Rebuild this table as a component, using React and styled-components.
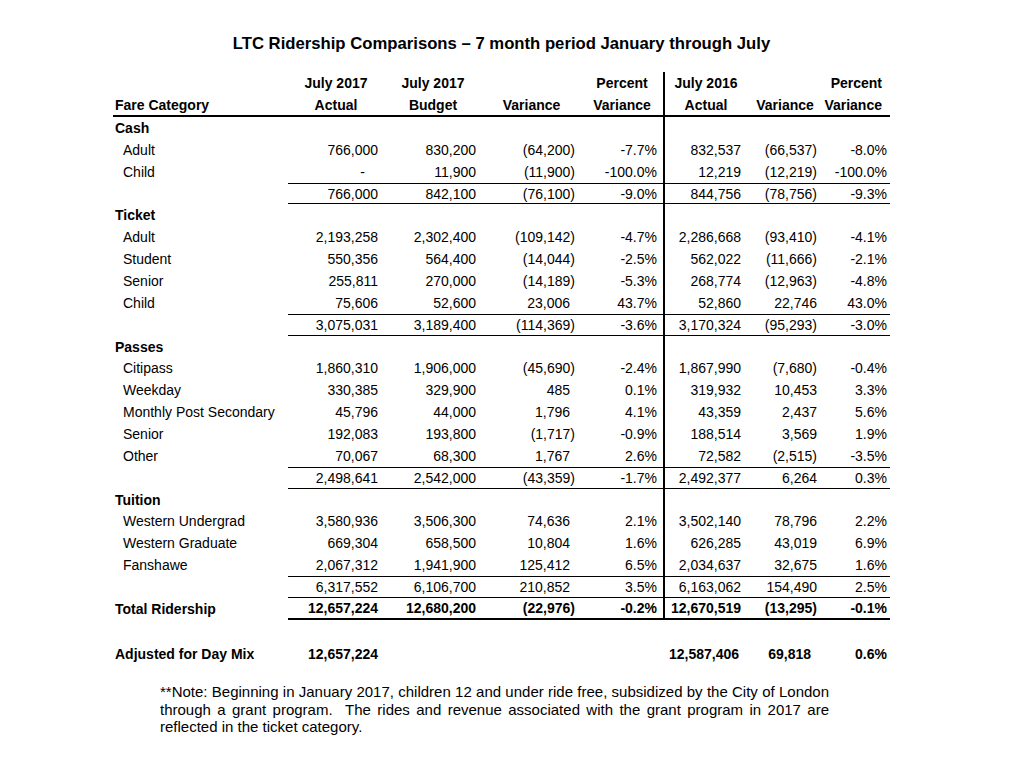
import React from 'react';
import styled, { createGlobalStyle } from 'styled-components';

const GlobalStyle = createGlobalStyle`
  body {
    margin: 0;
    background: #fff;
    color: #000;
    font-family: "Liberation Sans", Arial, sans-serif;
  }
`;

const Page = styled.div`
  width: 777px;
  padding: 34px 0 30px 113px;
`;

const Title = styled.h1`
  margin: 0 0 18px;
  height: 20px;
  line-height: 20px;
  font-size: 16.7px;
  font-weight: 700;
  text-align: center;
`;

const Row = styled.div`
  display: grid;
  grid-template-columns: 175px 602px;
  box-sizing: border-box;
  height: ${(p) => p.$h || 21.86}px;
  font-size: 14px;
  font-weight: ${(p) => (p.$bold ? 700 : 400)};
  border-bottom: ${(p) => (p.$rule ? `${p.$rule}px solid #000` : 'none')};
`;

const Label = styled.div`
  display: flex;
  align-items: center;
  padding-left: ${(p) => (p.$indent ? 10 : 2)}px;
  font-weight: ${(p) => (p.$bold ? 700 : 'inherit')};
  white-space: nowrap;
`;

const Figures = styled.div`
  display: grid;
  grid-template-columns: 96px 98px 99px 82px 84px 76px 67px;
  box-sizing: border-box;
  border-top: ${(p) => p.$top || 0}px solid #000;
  border-bottom: ${(p) => p.$bottom || 0}px solid #000;
`;

const Num = styled.div`
  display: flex;
  align-items: center;
  justify-content: flex-end;
  padding-right: ${(p) => p.$pad}px;
  border-left: ${(p) => (p.$divider ? '2px solid #000' : 'none')};
  white-space: nowrap;
`;

const Head = styled.div`
  display: flex;
  align-items: center;
  justify-content: ${(p) => (p.$right ? 'flex-end' : 'center')};
  padding-right: ${(p) => (p.$right ? 8 : 0)}px;
  border-left: ${(p) => (p.$divider ? '2px solid #000' : 'none')};
  white-space: nowrap;
`;

const Note = styled.div`
  margin: 18.5px 61px 0 47px;
  font-size: 15px;
  line-height: 17.5px;
`;

const NoteLine = styled.div`
  white-space: nowrap;
  text-align: ${(p) => (p.$justify ? 'justify' : 'left')};
  text-align-last: ${(p) => (p.$justify ? 'justify' : 'left')};
`;

const PADS = [6, 6, 6, 6, 6, 6, 3];

const data = [
  { label: 'Cash', kind: 'section' },
  { label: 'Adult', v: ['766,000', '830,200', '(64,200)', '-7.7%', '832,537', '(66,537)', '-8.0%'] },
  { label: 'Child', v: ['-', '11,900', '(11,900)', '-100.0%', '12,219', '(12,219)', '-100.0%'] },
  { kind: 'sub', v: ['766,000', '842,100', '(76,100)', '-9.0%', '844,756', '(78,756)', '-9.3%'] },
  { label: 'Ticket', kind: 'section' },
  { label: 'Adult', v: ['2,193,258', '2,302,400', '(109,142)', '-4.7%', '2,286,668', '(93,410)', '-4.1%'] },
  { label: 'Student', v: ['550,356', '564,400', '(14,044)', '-2.5%', '562,022', '(11,666)', '-2.1%'] },
  { label: 'Senior', v: ['255,811', '270,000', '(14,189)', '-5.3%', '268,774', '(12,963)', '-4.8%'] },
  { label: 'Child', v: ['75,606', '52,600', '23,006', '43.7%', '52,860', '22,746', '43.0%'] },
  { kind: 'sub', v: ['3,075,031', '3,189,400', '(114,369)', '-3.6%', '3,170,324', '(95,293)', '-3.0%'] },
  { label: 'Passes', kind: 'section' },
  { label: 'Citipass', v: ['1,860,310', '1,906,000', '(45,690)', '-2.4%', '1,867,990', '(7,680)', '-0.4%'] },
  { label: 'Weekday', v: ['330,385', '329,900', '485', '0.1%', '319,932', '10,453', '3.3%'] },
  { label: 'Monthly Post Secondary', v: ['45,796', '44,000', '1,796', '4.1%', '43,359', '2,437', '5.6%'] },
  { label: 'Senior', v: ['192,083', '193,800', '(1,717)', '-0.9%', '188,514', '3,569', '1.9%'] },
  { label: 'Other', v: ['70,067', '68,300', '1,767', '2.6%', '72,582', '(2,515)', '-3.5%'] },
  { kind: 'sub', v: ['2,498,641', '2,542,000', '(43,359)', '-1.7%', '2,492,377', '6,264', '0.3%'] },
  { label: 'Tuition', kind: 'section' },
  { label: 'Western Undergrad', v: ['3,580,936', '3,506,300', '74,636', '2.1%', '3,502,140', '78,796', '2.2%'] },
  { label: 'Western Graduate', v: ['669,304', '658,500', '10,804', '1.6%', '626,285', '43,019', '6.9%'] },
  { label: 'Fanshawe', v: ['2,067,312', '1,941,900', '125,412', '6.5%', '2,034,637', '32,675', '1.6%'] },
  { kind: 'sub', v: ['6,317,552', '6,106,700', '210,852', '3.5%', '6,163,062', '154,490', '2.5%'] },
  { label: 'Total Ridership', kind: 'total', v: ['12,657,224', '12,680,200', '(22,976)', '-0.2%', '12,670,519', '(13,295)', '-0.1%'] },
];

// accounting style: positive variance leaves room for the closing paren
const padFor = (value, i) => {
  if (value === '-') return 19;
  if (i === 2 && !value.endsWith(')')) return PADS[i] + 5;
  return PADS[i];
};

const FigureCells = ({ values, divider = true, pads }) =>
  values.map((value, i) => (
    <Num key={i} $pad={pads ? pads[i] : padFor(value, i)} $divider={divider && i === 4}>
      {value}
    </Num>
  ));

const HEAD_TOP = ['', 'July 2017', 'July 2017', '', 'Percent', 'July 2016', '', 'Percent'];
const HEAD_BOTTOM = ['Fare Category', 'Actual', 'Budget', 'Variance', 'Variance', 'Actual', 'Variance', 'Variance'];

const HeaderRow = ({ cells, rule }) => (
  <Row $h={22.5} $bold $rule={rule}>
    <Label>{cells[0]}</Label>
    <Figures>
      {cells.slice(1).map((text, i) => (
        <Head key={i} $divider={i === 4} $right={i === 6}>
          {text}
        </Head>
      ))}
    </Figures>
  </Row>
);

const DataRow = ({ row }) => {
  if (row.kind === 'section') {
    return (
      <Row>
        <Label $bold>{row.label}</Label>
        <Figures>
          <FigureCells values={['', '', '', '', '', '', '']} />
        </Figures>
      </Row>
    );
  }
  if (row.kind === 'sub') {
    return (
      <Row>
        <Label />
        <Figures $top={1} $bottom={1}>
          <FigureCells values={row.v} />
        </Figures>
      </Row>
    );
  }
  if (row.kind === 'total') {
    return (
      <Row $bold>
        <Label>{row.label}</Label>
        <Figures $bottom={2}>
          <FigureCells values={row.v} />
        </Figures>
      </Row>
    );
  }
  return (
    <Row>
      <Label $indent>{row.label}</Label>
      <Figures>
        <FigureCells values={row.v} />
      </Figures>
    </Row>
  );
};

export default function App() {
  return (
    <Page>
      <GlobalStyle />
      <Title>LTC Ridership Comparisons – 7 month period January through July</Title>
      <HeaderRow cells={HEAD_TOP} />
      <HeaderRow cells={HEAD_BOTTOM} rule={2} />
      {data.map((row, i) => (
        <DataRow key={i} row={row} />
      ))}
      <Row $h={23} />
      <Row $bold>
        <Label>Adjusted for Day Mix</Label>
        <Figures>
          <FigureCells
            divider={false}
            values={['12,657,224', '', '', '', '12,587,406', '69,818', '0.6%']}
            pads={[6, 6, 6, 6, 8, 12, 3]}
          />
        </Figures>
      </Row>
      <Note>
        <NoteLine $justify>
          **Note: Beginning in January 2017, children 12 and under ride free, subsidized by the City of London
        </NoteLine>
        <NoteLine $justify>
          through a grant program.&nbsp; The rides and revenue associated with the grant program in 2017 are
        </NoteLine>
        <NoteLine>reflected in the ticket category.</NoteLine>
      </Note>
    </Page>
  );
}
